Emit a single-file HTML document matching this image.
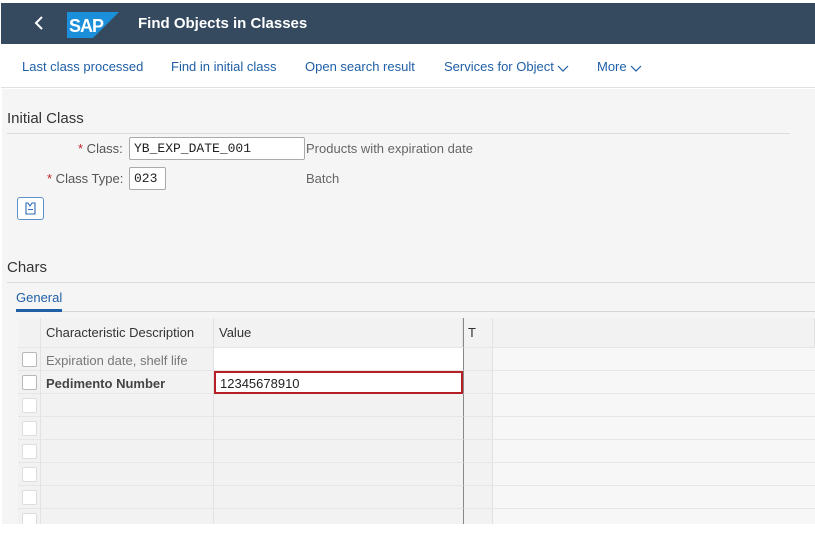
<!DOCTYPE html>
<html><head><meta charset="utf-8"><style>
*{margin:0;padding:0;box-sizing:border-box}
body{width:815px;height:547px;background:#fff;font-family:"Liberation Sans",Arial,sans-serif;position:relative;overflow:hidden}
.abs{position:absolute}
.hdr{left:1px;top:3px;width:814px;height:41px;background:#354a5f}
.tb{left:1px;top:44px;width:814px;height:44px;background:#fff;border-bottom:1px solid #e0e0e0}
.lnk{top:59px;font-size:13px;color:#1f5fa6;white-space:nowrap}
.lnk svg{vertical-align:middle;margin-left:2px}
.main{left:2px;top:89px;width:813px;height:435px;background:#f5f5f5}
.lbl{font-size:13px;color:#555}
.inp{background:#fff;border:1px solid #aaa;border-radius:2px;font-family:"Liberation Mono",monospace;font-size:13px;color:#222;padding:3px 0 0 4px}
.star{color:#c0262d}
.cell{position:absolute;border-right:1px solid #e2e2e2;border-bottom:1px solid #e6e6e6}
.cb{position:absolute;width:15px;height:15px;border:1px solid #b8b8b8;background:#fff;border-radius:2px}
</style></head><body>
<div class="abs hdr"></div>
<svg class="abs" style="left:33px;top:15px" width="12" height="16"><path d="M9 2 L3 8 L9 14" stroke="#fff" stroke-width="2" fill="none"/></svg>
<svg class="abs" style="left:67px;top:12px" width="52" height="26"><polygon points="0,0 52,0 26,26 0,26" fill="#1b8fd9"/><text x="2" y="20" font-family="Liberation Sans" font-weight="bold" font-size="18" fill="#fff" letter-spacing="-1">SAP</text></svg>
<div class="abs" style="left:138px;top:15px;font-size:15px;font-weight:bold;color:#fff">Find Objects in Classes</div>
<div class="abs tb"></div>
<div class="abs lnk" style="left:22px">Last class processed</div>
<div class="abs lnk" style="left:171px">Find in initial class</div>
<div class="abs lnk" style="left:305px">Open search result</div>
<div class="abs lnk" style="left:444px">Services for Object<svg width="14" height="10"><path d="M2 3 L7 8 L12 3" stroke="#1f5fa6" stroke-width="1.2" fill="none"/></svg></div>
<div class="abs lnk" style="left:597px">More<svg width="14" height="10"><path d="M2 3 L7 8 L12 3" stroke="#1f5fa6" stroke-width="1.2" fill="none"/></svg></div>
<div class="abs main"></div>
<div class="abs" style="left:7px;top:110px;font-size:15px;color:#333">Initial Class</div>
<div class="abs" style="left:7px;top:133px;width:783px;border-top:1px solid #ddd"></div>
<div class="abs lbl" style="left:78px;top:141px"><span class="star">*</span> Class:</div>
<div class="abs inp" style="left:129px;top:137px;width:176px;height:23px">YB_EXP_DATE_001</div>
<div class="abs lbl" style="left:306px;top:141px;color:#666">Products with expiration date</div>
<div class="abs lbl" style="left:47px;top:171px"><span class="star">*</span> Class Type:</div>
<div class="abs inp" style="left:129px;top:167px;width:37px;height:23px">023</div>
<div class="abs lbl" style="left:306px;top:171px;color:#666">Batch</div>
<div class="abs" style="left:17px;top:197px;width:27px;height:23px;border:1px solid #5b8fc7;border-radius:3px;background:#fff"></div>
<svg class="abs" style="left:22px;top:200px" width="18" height="17"><path d="M4 3 L6 3 L8 6 L10 3 L13 3 L13 14 L4 14 Z M6 9.5 L11 9.5" stroke="#2d6cb0" stroke-width="1.1" fill="none"/></svg>
<div class="abs" style="left:7px;top:259px;font-size:15px;color:#333">Chars</div>
<div class="abs" style="left:7px;top:282px;width:808px;border-top:1px solid #ddd"></div>
<div class="abs" style="left:16px;top:290px;font-size:13px;color:#1f5fa6">General</div>
<div class="abs" style="left:16px;top:311px;width:799px;border-top:1px solid #d5d5d5"></div>
<div class="abs" style="left:16px;top:309px;width:46px;height:3px;background:#1f5fa6"></div>
<div class="abs" style="left:18px;top:318px;width:797px;height:206px;background:#f2f2f2;overflow:hidden">
 <div class="cell" style="left:0;top:0;width:23px;height:30px;background:#f2f2f2"></div>
 <div class="cell" style="left:23px;top:0;width:173px;height:30px;font-size:13px;color:#333;padding:7px 5px">Characteristic Description</div>
 <div class="cell" style="left:196px;top:0;width:249px;height:30px;font-size:13px;color:#333;padding:7px 5px">Value</div>
 <div class="cell" style="left:445px;top:0;width:30px;height:30px;font-size:13px;color:#333;padding:7px 4px;border-left:1px solid #888">T</div>
 <div class="cell" style="left:475px;top:0;width:322px;height:30px"></div>
</div>
<div id="rows"></div>
<script>
var h='';for(var i=0;i<8;i++){var y=318+30+i*23;var bgV=i<2?'#fff':'#f2f2f2';
h+='<div class="abs" style="left:18px;top:'+y+'px;width:23px;height:23px;border-bottom:1px solid #e6e6e6;border-right:1px solid #e2e2e2"></div>';
h+='<div class="cb" style="left:22px;top:'+(y+4)+'px;'+(i>1?'border-color:#ddd':'')+'"></div>';
h+='<div class="abs" style="left:41px;top:'+y+'px;width:173px;height:23px;border-bottom:1px solid #e6e6e6;border-right:1px solid #e2e2e2;font-size:13px;padding:5px 5px;'+(i==0?'color:#777':'color:#444;font-weight:bold')+'">'+(i==0?'Expiration date, shelf life':(i==1?'Pedimento Number':''))+'</div>';
h+='<div class="abs" style="left:214px;top:'+y+'px;width:249px;height:23px;background:'+bgV+';border-bottom:1px solid #e6e6e6;font-size:13px;color:#222;padding:5px 5px;'+(i==1?'border:2px solid #b51f25;padding:3px 4px;':'')+'">'+(i==1?'12345678910':'')+'</div>';
h+='<div class="abs" style="left:463px;top:'+y+'px;width:30px;height:23px;border-left:1px solid #888;border-right:1px solid #e2e2e2;border-bottom:1px solid #e6e6e6"></div>';
h+='<div class="abs" style="left:493px;top:'+y+'px;width:322px;height:23px;background:#f7f7f7;border-bottom:1px solid #e6e6e6"></div>';}
document.getElementById('rows').innerHTML=h;
</script>
<div class="abs" style="left:0;top:524px;width:815px;height:23px;background:#fff"></div>
</body></html>
